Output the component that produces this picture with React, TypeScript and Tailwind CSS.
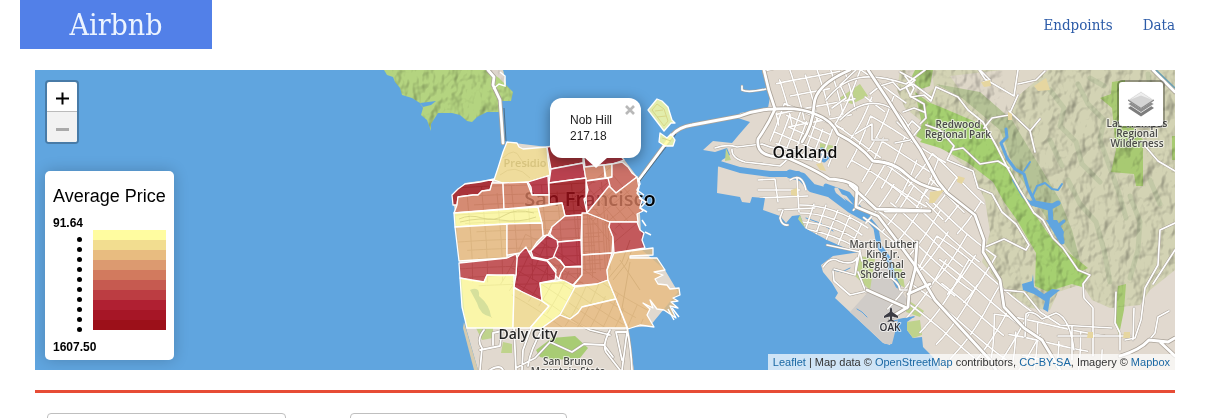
import React from "react";

const SERIF = "font-['Roboto_Slab','DejaVu_Serif_Condensed','DejaVu_Serif',serif]";
const SANS = "font-['Liberation_Sans',Arial,sans-serif]";

const PRICE_COLORS = [
  "#fffca0", "#f2dd90", "#e8bc80", "#dc9a70", "#d27a5e",
  "#c65a50", "#bc3d42", "#b02032", "#a61626", "#9c1019",
];

const LAND =
  "M762,70 L766,85 L770,97 L768,108 L740,113 L738,118 L750,122 L743,130 L737,137 L732,143 L713,141 L703,150 L715,152 L727,148 L730,155 L722,160 L718,167 L717,193 L740,197 L742,202 L750,203 L752,197 L765,198 L763,210 L780,216 L786,223 L792,216 L800,215 L805,228 L827,240 L850,250 L860,252 L833,256 L821,265 L823,272 L832,283 L838,293 L835,298 L883,343 L890,345 L893,338 L893,320 L915,316 L907,322 L907,330 L913,338 L922,337 L923,347 L933,357 L940,370 H1175 V70 Z";

const HILLS =
  "M900,70 L897,90 L905,108 L920,120 L926,142 L945,150 L972,172 L985,200 L990,232 L982,262 L1004,290 L1030,308 L1050,310 L1058,292 L1082,284 L1092,300 L1110,308 L1140,305 L1150,290 L1175,270 V70 H1048 L1018,96 L1008,112 L1002,70 Z";

const PARK =
  "M928,102 L943,108 L983,125 L997,148 L1010,168 L1033,212 L1047,232 L1062,252 L1080,270 L1088,275 L1082,287 L1072,284 L1062,287 L1048,292 L1035,286 L1036,253 L1017,220 L1004,202 L993,182 L967,162 L940,148 L920,142 L930,130 L926,118 Z";

const MARIN =
  "M384,70 L387,75 L393,77 L395,82 L400,88 L402,95 L412,98 L420,103 L423,108 L421,115 L427,120 L431,131 L431,124 L438,113 L452,113 L460,115 L467,121 L472,122 L477,117 L487,112 L501,112 L502,101 L511,101 L513,92 L506,85 L503,70 Z";

const DISTRICTS: [string, number][] = [
  ["507,142 517,143 519,147 523,149 547,147 548,160 550,175 528,182 518,184 503,183 494,180 498,168 503,152", 1],
  ["547,147 570,143 583,150 583,163 551,169", 9],
  ["583,150 604,151 619,154 624,160 612,164 585,167", 8],
  ["551,169 583,163 586,178 549,183", 7],
  ["584,167 604,165 605,178 586,181", 4],
  ["604,165 612,164 612,177 606,178", 3],
  ["612,164 622,162 628,167 632,173 637,177 616,193 609,186 608,178 612,177", 5],
  ["586,181 608,178 610,186 587,213 586,197 588,190", 6],
  ["549,183 586,178 586,197 584,199 587,213 582,215 565,216 562,203 549,204", 9],
  ["528,182 548,176 549,195 532,195 531,187", 7],
  ["452,195 458,189 465,184 480,182 494,179 492,183 490,190 482,191 478,195 473,195 458,197 457,205 453,205", 9],
  ["457,205 458,197 473,195 478,195 482,191 490,190 492,183 503,183 504,209 454,213", 4],
  ["503,183 527,182 532,195 549,195 549,205 504,209", 4],
  ["454,213 538,207 542,223 507,224 455,227", 0],
  ["538,207 562,203 565,216 552,227 548,235 543,236 542,223", 3],
  ["455,227 507,224 507,258 459,261", 2],
  ["507,224 542,223 543,236 537,242 531,251 520,253 507,255", 3],
  ["565,216 582,215 581,240 558,242 550,234 552,227", 5],
  ["582,213 587,213 610,222 609,227 613,237 612,253 582,255", 4],
  ["587,213 609,186 616,193 637,177 639,188 637,193 642,200 640,207 643,211 637,214 638,222 610,222", 4],
  ["610,222 637,222 640,230 644,233 642,240 645,248 614,253 613,237 609,227", 6],
  ["558,242 581,240 582,266 565,267 560,260 553,258", 7],
  ["547,235 557,240 558,246 553,258 547,260 533,257 531,251 537,245", 7],
  ["547,260 555,257 560,261 565,267 561,273 559,279 555,275 556,270", 5],
  ["517,258 520,253 526,247 532,258 547,261 556,273 555,280 540,283 542,301 527,295 514,287 516,275", 7],
  ["459,263 507,258 516,254 517,258 516,275 500,276 487,275 484,282 472,281 460,278", 6],
  ["460,278 484,282 487,275 514,275 514,288 513,328 467,328 462,307", 0],
  ["514,288 542,301 549,306 530,328 513,328", 1],
  ["540,283 565,280 575,287 568,303 560,315 542,328 530,328 549,306 542,301", 0],
  ["565,267 582,267 582,275 573,285 565,281 559,279 561,273", 5],
  ["582,255 612,253 607,270 608,280 597,284 573,286 582,275", 4],
  ["575,287 597,284 608,280 616,299 582,307 578,313 570,319 560,315", 1],
  ["616,299 627,328 542,328 560,315 570,319 578,313 582,307", 2],
  ["614,253 653,248 653,255 630,256 630,258 657,258 665,270 654,272 663,275 655,279 658,284 667,285 670,289 679,288 680,295 673,298 678,301 671,302 678,308 670,306 676,318 664,310 657,309 650,300 653,308 643,303 650,309 647,315 654,327 640,325 628,329 616,299 608,280 607,270", 2],
  ["648,110 657,99 662,101 668,107 672,120 675,123 671,123 664,131", 0],
  ["660,133 667,138 671,134 675,140 673,146 665,146 659,142", 0],
];

// Street mesh: two crossing families of gently bending lines around a centre.
function mesh(cx: number, cy: number, deg: number, w: number, h: number, sx: number, sy: number, bend: number) {
  const a = (deg * Math.PI) / 180;
  const point = (u: number, v: number) => {
    const vv = v + bend * Math.sin(u / 32);
    const uu = u + bend * Math.sin(v / 24 + 1);
    return `${(cx + uu * Math.cos(a) - vv * Math.sin(a)).toFixed(1)},${(cy + uu * Math.sin(a) + vv * Math.cos(a)).toFixed(1)}`;
  };
  let d = "";
  let row = 0;
  for (let v = -h / 2; v <= h / 2; v += sy) {
    const inset = (row++ % 3) * sx * 0.7;
    for (let u = -w / 2 + inset; u <= w / 2 - inset; u += 8) d += `${u === -w / 2 + inset ? "M" : "L"}${point(u, v)} `;
  }
  let col = 0;
  for (let u = -w / 2; u <= w / 2; u += sx) {
    const inset = (col++ % 2) * sy * 0.8;
    for (let v = -h / 2 + inset; v <= h / 2; v += 8) d += `${v === -h / 2 + inset ? "M" : "L"}${point(u, v)} `;
  }
  return d;
}

const STREETS = [
  mesh(812, 92, -14, 84, 60, 13, 15, 2),
  mesh(806, 138, 22, 66, 46, 9, 10, 1),
  mesh(868, 118, 30, 58, 70, 21, 20, 4),
  mesh(896, 168, 28, 92, 62, 20, 16, 3),
  mesh(946, 196, 40, 76, 42, 17, 20, 3),
  mesh(925, 236, 38, 150, 60, 18, 14, 3),
  mesh(968, 316, 36, 140, 88, 20, 18, 3),
  mesh(1048, 350, 8, 116, 50, 22, 18, 3),
  "M758,180 L775,179 L778,202 M758,190 H800 M760,198 L808,196 M778,210 L815,208 M797,178 L799,212 M790,180 Q802,172 806,190",
  "M800,205 Q834,205 868,228 M800,213 Q832,213 862,235 M802,222 Q834,224 862,243 M806,229 Q836,235 857,248 M814,204 L806,228 M826,205 L816,234 M838,210 L826,240 M850,215 L838,245 M862,223 L850,248",
];

const MINOR = [
  "M742,86 V90 Q748,93 766,89 M715,148 Q727,144 737,147 L762,144 Q775,150 800,150",
  "M732,149 Q731,158 745,162 L780,166 L790,157 L812,160",
  "M826,100 Q840,82 858,78 T906,84 L925,70 M840,120 Q860,100 880,104 T910,130 M856,70 L840,85 L846,98 L832,108",
  "M897,122 L905,130 L912,121 L920,128 L910,140 L895,143 M855,134 L872,124 L872,140 L888,140",
  "M870,94 L880,86 L893,82 L900,90 L913,84 L924,92 L932,98 M905,76 L914,88 L910,96 L924,104 L926,118 L920,124 M903,112 L914,108 L924,112",
  "M900,72 L915,80 L906,87 L911,97 L924,95 L931,101 L936,87 L958,97 L968,110 L983,122 L997,147 L1006,165 L1020,190 L1034,213 L1043,220 L1053,238 L1063,248 L1078,270 L1090,275 L1083,284 L1084,298 L1093,308 L1093,356",
  "M979,70 L985,79 L1014,96 L1018,70 M983,82 L990,80 L980,70 M1018,95 L1009,115 L992,118 L984,128 M1009,111 L1030,131 L1035,152 M1030,131 L1040,119 M1018,84 L1036,80 L1045,71",
  "M926,125 L940,130 L954,146 L947,160 L973,171 L978,188 L992,194 L1002,212 L1016,224 L1029,245 L1026,250 L1004,239 L985,247 M952,150 L963,148 L980,164 L998,161 L1009,168",
  "M1145,146 L1158,161 L1175,171 M1175,223 L1160,230 L1158,265 L1145,288 L1141,320 L1135,338 L1125,340 M1153,284 L1164,267 L1175,250 M1134,308 L1133,340 M1116,292 L1115,323 L1120,333 V350 M1169,311 L1158,317 L1155,333 L1145,345",
  "M1003,290 L1024,292 L1040,312 L1060,325 L1112,328 M1072,326 V360 M1058,336 H1130 M1025,337 L1026,314 Q1032,309 1042,319 L1056,313 Q1070,318 1074,350",
  "M823,267 Q830,256 839,261 Q852,266 857,258 L855,275 L834,269 M833,271 L834,281 L850,295 L867,291 M860,250 L855,275 M858,272 L866,292 M884,274 Q900,282 900,290 L908,290",
  "M827,245 L860,252 L862,261",
  "M783,210 L780,218 Q782,226 788,225",
];

const MAJOR = [
  "M503,143 L500,100 L493,85 L494,77 L488,70",
  "M638,181 L672,135 Q679,127 692,125 L740,116 Q758,109 775,109 Q800,107 815,114 Q832,120 838,134 Q860,145 873,161 Q894,162 906,174 T940,190",
  "M764,70 Q768,90 775,109 Q768,125 758,139 Q756,153 771,156 L788,158 Q816,170 829,179 Q850,180 857,188 L856,207 L878,216 L900,245 L914,264 L935,300 L958,325 L990,360 L996,370",
  "M850,70 Q815,85 814,105 T802,142",
  "M868,70 L888,100 L905,127 L920,149 L938,182 L947,193 L975,215 L984,240 L983,252 L1000,280 L1004,307 L1024,328 L1042,340 L1060,370",
  "M930,211 H885 M850,185 L876,209 L930,211",
  "M917,242 L915,270 L909,294 L908,307 L890,318 M867,290 L907,308 M908,294 L930,284",
  "M1120,356 Q1140,350 1149,340 L1168,342 L1175,338 M1160,342 L1175,356 M1153,70 L1175,92",
];

const PENINSULA = [
  "M484,330 Q476,340 482,348 L480,370 M480,350 L500,346 L502,331 L493,333 V345 M514,328 L516,370 M531,328 L523,350 L522,370 M516,368 L535,358 L550,342 L572,352 L584,344 L604,345 L613,357 M543,328 Q530,350 528,366 M560,315 L590,330 L610,335 M610,330 Q602,345 606,352 L620,370 M617,332 H627 L622,370 M627,328 Q631,348 632,370 M616,332 L622,360 M490,370 Q500,364 503,370",
];

function Roads({ paths, outer, inner, casing = "#aaa298" }: { paths: string[]; outer: number; inner: number; casing?: string }) {
  return (
    <g fill="none" strokeLinejoin="round" strokeLinecap="round">
      <g stroke={casing} strokeWidth={outer}>{paths.map((d, i) => <path key={i} d={d} />)}</g>
      <g stroke="#ffffff" strokeWidth={inner}>{paths.map((d, i) => <path key={i} d={d} />)}</g>
    </g>
  );
}

function Label({ x, y, size, lines, color = "#4a4a48", weight = 600, step = 10 }: {
  x: number; y: number; size: number; lines: string[]; color?: string; weight?: number; step?: number;
}) {
  return (
    <text x={x} y={y} textAnchor="middle" fontSize={size} fontWeight={weight} fill={color}
      stroke="#ffffff" strokeOpacity={0.65} strokeWidth={2} strokeLinejoin="round" paintOrder="stroke">
      {lines.map((line, i) => <tspan key={line} x={x} y={y + i * step}>{line}</tspan>)}
    </text>
  );
}

function MapCanvas() {
  return (
    <svg className="absolute inset-0 h-full w-full font-['Open_Sans','Noto_Sans',sans-serif]"
      viewBox="35 70 1140 300" preserveAspectRatio="xMidYMid slice" role="img" aria-label="Map">
      <defs>
        <clipPath id="land"><path d={LAND} /></clipPath>
        <clipPath id="hills"><path d={HILLS} /></clipPath>
        <clipPath id="parks"><path d={MARIN} /></clipPath>
        <clipPath id="city">{DISTRICTS.map(([p]) => <polygon key={p} points={p} />)}</clipPath>
        <filter id="relief" x="0" y="0" width="100%" height="100%" colorInterpolationFilters="sRGB">
          <feTurbulence type="fractalNoise" baseFrequency="0.07 0.055" numOctaves={3} seed={8} />
          <feDiffuseLighting surfaceScale={4} diffuseConstant={1.2} lightingColor="#ffffff">
            <feDistantLight azimuth={215} elevation={55} />
          </feDiffuseLighting>
        </filter>
      </defs>

      <rect x="35" y="70" width="1140" height="300" fill="#60a5df" />
      <path d={LAND} fill="#e1d9cf" />
      <path d="M867,262 L890,270 L907,300 L900,313 L892,344 L885,344 L850,312 L868,292 Z" fill="#d0ccc8" />
      <g fill="#bfd38c">
        <path d="M858,256 L875,258 L870,290 L855,276 Z M892,262 L902,270 L905,288 L895,282 Z" />
        <path d="M908,300 L924,311 L920,317 L906,312 Z M907,322 L920,320 L922,335 L913,338 L907,330 Z M838,99 L860,84 L868,96 L852,104 Z" />
        <path d="M820,143 L834,146 L828,152 L820,149 Z M800,215 L805,228 L798,219 Z M726,148 L731,160 L725,161 Z" />
        <path d="M982,250 L992,238 L1014,242 L1008,250 L995,256 L984,260 Z M1010,262 L1032,246 L1036,272 L1022,276 Z" />
      </g>
      <path d={HILLS} fill="#d3d3b4" />
      <path d="M905,70 L932,70 L934,88 L920,100 Z M1002,70 H1048 L1020,94 L1008,116 L983,116 L975,98 L960,90 L950,76 Z" fill="#ded7c8" />
      <path d="M936,84 L962,98 L1000,130 L1014,168 L1054,230 L1082,268 L1072,230 L1060,200 L1012,120 L980,92 Z" fill="#b5c296" />
      <g fill="none" stroke="#b4c09a" strokeWidth="5" strokeOpacity="0.55" strokeLinecap="round" strokeLinejoin="round">
        <path d="M1050,90 L1064,108 L1060,126 L1076,142 L1082,164 L1100,182 M1078,84 L1088,104 L1104,120 L1100,140 L1118,190 L1126,218 M1068,180 L1080,204 L1096,222 L1104,250 L1110,282 M1130,196 L1140,222 L1138,250 L1130,278 M1150,180 L1160,204 M1090,78 L1104,86 M1148,74 L1152,100 M1050,140 L1062,166" />
      </g>
      <path d="M1112,82 L1125,80 V112 L1135,130 L1143,140 V186 H1136 L1134,174 L1111,172 L1116,150 L1112,108 L1100,98 L1111,94 Z M1172,136 V160 L1175,160 V136 Z" fill="#a8ca72" />
      <path d="M1118,286 L1126,284 L1124,310 L1119,335 L1114,320 Z M1050,238 L1088,268 L1080,272 Z" fill="#a8ca72" />
      <path d="M915,70 H933 L930,86 L918,90 L912,76 Z M915,92 L928,102 L926,142 L916,136 L922,124 Z" fill="#a6c874" />
      <path d={PARK} fill="#a5d070" />
      <g clipPath="url(#hills)" opacity="0.42" className="mix-blend-multiply"><rect x="860" y="70" width="315" height="260" filter="url(#relief)" /></g>

      <path d={MARIN} fill="#b4d480" />
      <path d="M487,70 H503 L506,85 L499,78 Z" fill="#ddd5cc" />
      <g clipPath="url(#parks)" opacity="0.4" className="mix-blend-multiply"><rect x="380" y="70" width="140" height="65" filter="url(#relief)" /></g>

      <path d="M455,212 L452,195 L465,183 L494,179 L507,142 L547,147 L620,154 L638,178 L642,250 L665,270 L678,292 L650,326 L627,328 L634,370 H478 L466,328 Z" fill="#e1d9cf" />
      <path d="M476,328 H493 V338 L482,340 Z M503,342 L512,344 V353 H501 Z" fill="#bfd38c" />
      <path d="M536,350 L552,338 L575,336 L588,348 L580,358 L555,360 L540,357 Z" fill="#a8cc74" />
      <path d="M464,322 L478,370 H474 L463,328 Z" fill="#d6cbaf" />

      <g fill="none" stroke="#60a5df" strokeLinecap="round" strokeLinejoin="round">
        <path d="M717,163 L740,170 L770,174 L798,174" strokeWidth="6" />
        <path d="M790,174 L802,177 L812,188 L830,193 L850,208 L866,217" strokeWidth="9" />
        <path d="M826,186 L848,194 L860,209 M866,216 L876,228 L879,246 L888,258 L893,276 L898,286" strokeWidth="5" />
        <path d="M822,150 L824,160 L828,156" strokeWidth="5" />
        <path d="M806,218 L820,223 L833,231 M833,270 L842,272 L850,268 M857,309 L862,312 L867,317 M893,321 L914,317" strokeWidth="1" />
        <path d="M1006,129 L1007,137 L1001,143 L1007,158 L1015,169 L1024,174 L1028,188 L1035,202 L1052,205" strokeWidth="3" />
        <path d="M1024,171 L1030,162 M1033,195 L1037,186 L1045,183 L1052,189 L1058,190 L1062,184 M1013,180 L1023,197 L1036,206" strokeWidth="2" />
        <path d="M1032,203 L1049,208 L1058,203 M1050,206 L1051,222 L1060,230 L1062,242" strokeWidth="5" />
        <path d="M1056,228 L1064,221" strokeWidth="3" />
      </g>
      <path d="M1046,220 L1057,220 L1064,232 L1061,245 L1054,233 Z M1022,284 L1032,281 L1033,274 L1034,287 L1044,294 L1052,289 L1060,290 L1050,298 L1048,312 L1043,309 L1045,301 L1034,294 L1023,290 Z" fill="#60a5df" />
      <path d="M846,201 L838,188 Q832,186 836,193 Z M858,210 L852,205 Z" fill="#e1d9cf" />
      <path d="M420,103 L436,101 L431,105 L423,107 Z" fill="#60a5df" />

      <g clipPath="url(#land)"><Roads paths={STREETS} outer={2.4} inner={1.6} casing="#b8afa4" /></g>
      <Roads paths={MINOR} outer={2.6} inner={1.7} />
      <Roads paths={PENINSULA} outer={3} inner={1.8} />
      <g clipPath="url(#city)" fill="none" stroke="#a39484" strokeWidth="1">
        <path d={mesh(530, 235, -3, 150, 100, 15, 9, 1)} />
        <path d={mesh(612, 205, -40, 50, 60, 9, 10, 0)} />
        <path d={mesh(594, 245, -3, 30, 60, 5, 9, 0)} />
        <path d={mesh(575, 300, 30, 150, 60, 11, 12, 3)} />
        <path d="M607,280 L622,262 L630,240 M613,280 L626,264 L632,250 M620,260 L640,290 M630,262 L620,320" stroke="#8a7c6a" />
        <path d="M503,158 Q515,146 520,158 T545,165 M500,175 Q515,162 530,178 M475,290 Q480,305 492,318" />
      </g>
      <Roads paths={MAJOR} outer={4.4} inner={2.8} />
      <path d="M493,89 L499,84 L505,86 V76 L500,72" fill="none" stroke="#ffffff" strokeWidth="1.5" />
      <path d="M506,141 L504,108 M640,181 L676,134" fill="none" stroke="#4b6f8c" strokeWidth="1" />
      <path d="M1156,70 L1175,88" fill="none" stroke="#6aa0b4" strokeWidth="1.5" />
      <g fill="#e6d6a0">
        <path d="M981,82 L990,80 L991,86 L984,87 Z M1034,86 L1046,78 L1050,90 L1038,91 Z M930,192 L944,190 L934,203 H929 Z M958,176 L965,178 L962,184 L957,182 Z M1008,112 L1012,114 V120 H1008 Z M1088,332 H1093 V338 H1087 Z M1124,332 H1130 V338 H1123 Z M791,190 L797,188 V196 L791,195 Z M816,164 L822,163 L826,171 L820,170 Z" />
      </g>

      <text x="590" y="206" textAnchor="middle" fontSize="20" fontWeight="600" fill="#000000" stroke="#ffffff" strokeWidth="2" strokeOpacity="0.4" paintOrder="stroke">San Francisco</text>
      <text x="525" y="167" textAnchor="middle" fontSize="11" fontWeight="600" fill="#5c5030">Presidio</text>

      <g fillOpacity="0.82" stroke="#ffffff" strokeWidth="1.3" strokeLinejoin="round">
        {DISTRICTS.map(([points, level]) => <polygon key={points} points={points} fill={PRICE_COLORS[level]} />)}
      </g>
      <g fill="none" stroke="#ffffff" strokeWidth="1.5">
        <path d="M638,178 L640,184 L637,190 L644,195 M639,198 L646,202 L640,208 L647,212 M642,220 L646,226 M645,232 L651,235 M672,308 L679,317 M668,309 L674,320" />
      </g>
      <g fill="none" stroke="#d6d080" strokeWidth="0.8">
        <path d="M459,219 Q470,214 482,218 T505,215 T534,213 M460,222 Q480,217 500,220 T536,217 M652,110 L657,104 L664,109 L668,121 L664,126 Z M655,111 L663,110 M657,117 L666,116 M662,138 L671,141" />
      </g>
      <path d="M470,290 Q480,286 479,296 Q490,305 491,317 Q480,315 477,303 Z" fill="#d6e09c" />

      <Label x={805} y={158} size={16} lines={["Oakland"]} color="#0e0e0e" />
      <Label x={528} y={339} size={14} lines={["Daly City"]} color="#262626" />
      <Label x={568} y={365} size={10} lines={["San Bruno", "Mountain State"]} />
      <Label x={958} y={128} size={10} lines={["Redwood", "Regional Park"]} />
      <Label x={1137} y={127} size={10} lines={["Las Trampas", "Regional", "Wilderness"]} />
      <Label x={883} y={248} size={10} lines={["Martin Luther", "King Jr.", "Regional", "Shoreline"]} />
      <Label x={890} y={331} size={10} lines={["OAK"]} color="#303036" />
      <path d="M891,307 Q892.300,308 892.300,312 L898,316 V318 L892.300,316.500 L892,319.500 L894.500,321 V322 L891,321.300 L887.500,322 V321 L890,319.500 L889.700,316.500 L884,318 V316 L889.700,312 Q889.700,308 891,307 Z" fill="#3c3c44" stroke="#ffffff" strokeOpacity="0.6" strokeWidth="1" paintOrder="stroke" />
    </svg>
  );
}

function LayersIcon() {
  return (
    <svg viewBox="0 0 26 26" className="h-[26px] w-[26px]" aria-hidden="true">
      <path d="M0,17 L13,25.500 L26,17 L23,15 L13,21.500 L3,15 Z" fill="#7d7d7d" />
      <path d="M0,13 L13,21.500 L26,13 L23,11 L13,17.500 L3,11 Z" fill="#8e8e8e" stroke="#ffffff" strokeWidth="0.600" />
      <path d="M0,9 L13,17.500 L26,9 L13,0.500 Z" fill="#d4d4d4" stroke="#ffffff" strokeWidth="0.600" />
      <path d="M0,9 L13,17.500 L26,9" fill="none" stroke="#8a8a8a" strokeWidth="1.400" />
      <path d="M2,8.800 L13,1.500 L24,8.800 L13,4.500 Z" fill="#eeeeee" />
    </svg>
  );
}

function Popup() {
  return (
    <div className="absolute top-7 left-1/2 -ml-[55px] w-[91px] rounded-xl bg-white py-[14px] pl-5 text-xs leading-4 text-[#222] shadow-[0_3px_14px_rgba(0,0,0,0.4)]">
      <div>Nob Hill</div>
      <div>217.18</div>
      <button type="button" aria-label="Close popup" className="absolute top-[7px] right-[6px] text-[#b8b8b8]">
        <svg viewBox="0 0 10 10" className="block h-[10px] w-[10px]" aria-hidden="true">
          <path d="M1,1 L9,9 M9,1 L1,9" stroke="currentColor" strokeWidth="2.600" />
        </svg>
      </button>
      <svg viewBox="0 0 24 11" className="absolute top-full left-1/2 -mt-px h-[11px] w-6 -translate-x-1/2" aria-hidden="true">
        <path d="M0,0 H24 L12,11 Z" fill="#ffffff" />
      </svg>
    </div>
  );
}

function Legend() {
  return (
    <section className="absolute bottom-[10px] left-[10px] rounded-[5px] bg-white px-2 pt-3 pb-[5px] text-black shadow-[0_0_15px_rgba(0,0,0,0.2)]">
      <h2 className="text-lg leading-[26px]">Average Price</h2>
      <div className="mt-[6px] text-xs leading-4 font-bold">91.64</div>
      <div className="-mt-px flex h-[100px] gap-[11px]">
        <ul className="w-[29px] pt-[2px]">
          {PRICE_COLORS.map((c) => (
            <li key={c} className="flex h-[10px] items-end justify-end">
              <span className="h-[5px] w-[5px] rounded-full bg-black" />
            </li>
          ))}
        </ul>
        <ul className="flex-1">
          {PRICE_COLORS.map((c) => <li key={c} className="h-[10px]" style={{ backgroundColor: c }} />)}
        </ul>
      </div>
      <div className="mt-[9px] text-xs leading-4 font-bold">1607.50</div>
    </section>
  );
}

export default function App() {
  const link = "text-[#1a68a4] hover:underline";
  return (
    <div className={`bg-white ${SANS}`}>
      <header className="flex items-center justify-between pr-[43px] pl-5">
        <a href="#" className={`flex h-[49px] w-48 items-center justify-center bg-[#5280e8] text-3xl leading-8 text-[#ecf4ff] ${SERIF}`}>Airbnb</a>
        <nav className={`flex gap-[30px] text-[15px] leading-5 text-[#2c5ba8] ${SERIF}`}>
          <a href="#endpoints">Endpoints</a>
          <a href="#data">Data</a>
        </nav>
      </header>
      <main className="mt-[21px] mr-[43px] ml-[35px]">
        <div className="relative h-[300px] overflow-hidden bg-[#60a5df]">
          <MapCanvas />
          <Popup />
          <div className="absolute top-[10px] left-[10px] flex flex-col overflow-hidden rounded-[4px] border-2 border-black/25 bg-white bg-clip-padding">
            <button type="button" aria-label="Zoom in" className="flex h-[30px] w-[30px] items-center justify-center border-b border-[#bbb] text-black">
              <svg viewBox="0 0 13 13" className="mt-1 h-[13px] w-[13px]" aria-hidden="true"><path d="M0,6.500 H13 M6.500,0.500 V12.500" stroke="currentColor" strokeWidth="2" /></svg>
            </button>
            <button type="button" aria-label="Zoom out" disabled className="flex h-[30px] w-[30px] items-center justify-center bg-[#f2f2f2] text-[#aaa]">
              <svg viewBox="0 0 13 13" className="mt-1 h-[13px] w-[13px]" aria-hidden="true"><path d="M0,6.500 H13" stroke="currentColor" strokeWidth="3" /></svg>
            </button>
          </div>
          <button type="button" aria-label="Layers" className="absolute top-[10px] right-[10px] flex h-12 w-12 items-center justify-center rounded-[5px] border-2 border-black/30 bg-white bg-clip-padding">
            <LayersIcon />
          </button>
          <Legend />
          <div className="absolute right-0 bottom-0 bg-white/70 px-[5px] text-[11px] leading-4 whitespace-nowrap text-[#333]">
            <a href="#leaflet" className={link}>Leaflet</a> | Map data © <a href="#osm" className={link}>OpenStreetMap</a> contributors, <a href="#license" className={link}>CC-BY-SA</a>, Imagery © <a href="#mapbox" className={link}>Mapbox</a>
          </div>
        </div>
        <hr className="mt-5 border-t-[3px] border-[#e74c35]" />
        <form className="mt-5 flex gap-16 pl-3">
          <input type="text" aria-label="First filter" className="h-9 w-[239px] rounded-[4px] border border-[#bfbfbf] bg-white px-3" />
          <input type="text" aria-label="Second filter" className="h-9 w-[217px] rounded-[4px] border border-[#bfbfbf] bg-white px-3" />
        </form>
      </main>
    </div>
  );
}
